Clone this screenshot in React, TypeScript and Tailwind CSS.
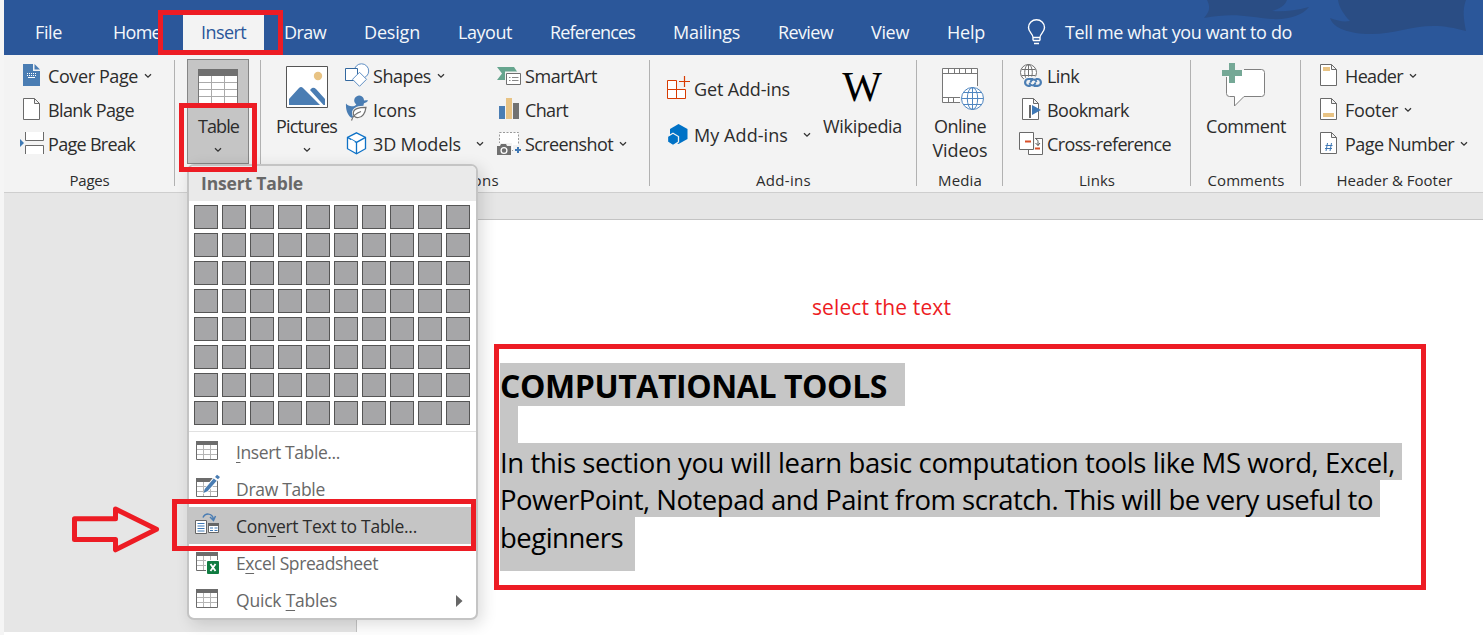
import { useLayoutEffect, useRef, useState } from "react";
import type { ReactNode } from "react";

/* Spreads its text over the width of its own box by adjusting the tracking. */
function Fit({ className = "", children }: { className?: string; children: ReactNode }) {
  const box = useRef<HTMLSpanElement>(null);
  const text = useRef<HTMLSpanElement>(null);
  const [spacing, setSpacing] = useState(0);
  useLayoutEffect(() => {
    if (!box.current || !text.current) return;
    const count = (text.current.textContent ?? "").length;
    const natural = text.current.getBoundingClientRect().width;
    setSpacing((box.current.getBoundingClientRect().width + 1 - natural) / Math.max(count, 1));
  }, []);
  return (
    <span ref={box} className={`block shrink-0 whitespace-nowrap ${className}`}>
      <span ref={text} className="inline-block" style={{ letterSpacing: spacing }}>
        {children}
      </span>
    </span>
  );
}

function Chevron({ className = "" }: { className?: string }) {
  return (
    <svg className={`shrink-0 ${className}`} width="8" height="6" viewBox="0 0 8 6" fill="none" stroke="#333" strokeWidth="1.3">
      <path d="M1 1.2 4 4.2 7 1.2" />
    </svg>
  );
}

function Icon({ children, w = 28 }: { children: ReactNode; w?: number }) {
  return (
    <svg className="shrink-0" width={w} height="34" viewBox={`0 0 ${w} 34`} fill="none">
      {children}
    </svg>
  );
}

function Row({ icon, children, className = "" }: { icon: ReactNode; children: ReactNode; className?: string }) {
  return (
    <div className={`flex h-[34px] items-center ${className}`}>
      {icon}
      <div className="flex items-center pb-[2px]">{children}</div>
    </div>
  );
}

function Group({ className, label, labelWidth, last = false, children }: { className: string; label: string; labelWidth: string; last?: boolean; children?: ReactNode }) {
  return (
    <section className={`flex shrink-0 ${className}`}>
      <div className="flex min-w-0 flex-1 flex-col pt-[5px]">
        <div className="flex h-[109px]">{children}</div>
        <div className="flex h-[24px] items-center justify-center text-[15px]">
          {label && <Fit className={labelWidth}>{label}</Fit>}
        </div>
      </div>
      {!last && <div className="mt-[5px] h-[126px] w-px bg-[#b1b1b1]" />}
    </section>
  );
}

const PageOutline = () => <path d="M3.5 4.5h11l5 5v16h-16zM14.5 4.5v5h5" fill="#fff" stroke="#6a6a6a" />;

const CoverIcon = () => (
  <Icon>
    <path d="M3 4h10v7h7v15H3z" fill="#4a7db3" />
    <path d="M14.5 4v5.500H20z" fill="#4a7db3" />
    <path d="M7 13.500h9M7 15.500h9" stroke="#fff" strokeDasharray="1 1" />
    <path d="M8 17.500h7" stroke="#fff" />
  </Icon>
);
const BlankIcon = () => <Icon><PageOutline /></Icon>;
const BreakIcon = () => (
  <Icon>
    <path d="M5.500 4v8.500h18V4M5.500 26v-8.500h18V26" fill="#fff" stroke="#6a6a6a" />
    <path d="M0 11v8l4-4z" fill="#3f7ab5" />
  </Icon>
);
const ShapesIcon = () => (
  <Icon w={29}>
    <circle cx="17.500" cy="11" r="7.200" fill="#fff" stroke="#5f8fc4" />
    <path d="M1.500 8.500h12v12h-12z" fill="#fff" stroke="#33689f" />
    <path d="m15.500 12.300 7 7-7 7-7-7z" fill="#fff" stroke="#5f8fc4" />
  </Icon>
);
const DuckIcon = () => (
  <Icon w={29}>
    <path d="M2 9.500c2 2.500 5 3.500 9 2.300l1.300-1.300A4.900 4.900 0 1 1 20 6.500c1.500 0 3-.3 4-.2-.6 1.700-2.200 2.600-4 2.900-.5 1.200-.5 2.500-.5 3.300L8 24c-4-2-6.500-8-6-14.500z" fill="#4a7db3" />
    <path d="M22.500 12.500c-7.500 0-14 1.500-13.500 7 .2 3 2.500 4.800 5.500 4.500 6-.5 7-6 8-11.500z" fill="#f3f3f3" stroke="#f3f3f3" strokeWidth="2" />
    <path d="M22 13.300c-7 0-13 1.400-12.700 6.500.2 2.600 2.500 4 5 3.700 5.700-.5 7-5.500 7.700-10.200zM7.500 26.500c1.500-5 5-7.500 9.500-9" fill="#fff" stroke="#707070" strokeWidth="1.200" />
  </Icon>
);
const CubeIcon = () => (
  <Icon w={29}>
    <path d="m12.500 4.800 9 4.600v11.300l-9 5-9-5V9.400z" fill="#fff" stroke="#0f72c6" strokeWidth="1.300" />
    <path d="m3.500 9.400 9 5 9-5M12.500 14.400v11.300" stroke="#0f72c6" strokeWidth="1.300" />
    <path d="m6.800 12.300 3.600 1.900" stroke="#fff" strokeWidth="1.600" />
  </Icon>
);
const SmartArtIcon = () => (
  <Icon w={29}>
    <path d="M1 7h17l4 6-5 7H1l5-6.500z" fill="#66a58e" />
    <path d="M9 11.500h18v14H9z" fill="#f3f3f3" />
    <path d="M10.500 13.500h14v11h-14z" fill="#fff" stroke="#707070" />
    <path d="M13 17.500h1.500M16 17.500h6.500M13 20.500h1.500M16 20.500h6.500" stroke="#888" />
  </Icon>
);
const ChartIcon = () => (
  <Icon w={29}>
    <path d="M3 12h6v13H3z" fill="#4a7db3" />
    <path d="M10 4h6v21h-6z" fill="#e8c384" />
    <path d="M17 9h6v16h-6z" fill="#727272" />
  </Icon>
);
const ScreenshotIcon = () => (
  <Icon w={29}>
    <path d="M3.500 4.500h19v18h-19z" fill="#fff" stroke="#999" strokeDasharray="2 1.500" />
    <path d="M0 15h16v13H0zM17 17h9v9h-9z" fill="#f3f3f3" />
    <path d="M1 18h3l1-2h5l1 2h4v9H1z" fill="#707070" />
    <circle cx="8" cy="22.500" r="2.900" fill="#707070" stroke="#fff" strokeWidth="1.300" />
    <path d="M22 19v6M19 22h6" stroke="#3f78b5" strokeWidth="2" />
  </Icon>
);
const LinkIcon = () => (
  <Icon>
    <g stroke="#707070">
      <circle cx="9.500" cy="12.500" r="8" fill="#fff" />
      <ellipse cx="9.500" cy="12.500" rx="3.800" ry="8" />
      <path d="M2.500 9.500h14M2.500 15.500h14M9.500 4.500v16" />
    </g>
    <rect x="4" y="16.500" width="20" height="11.500" rx="5.700" fill="#f3f3f3" />
    <path d="M14 19H9.500a3.400 3.400 0 0 0 0 6.800h2.200M14.500 25.800h4a3.400 3.400 0 0 0 0-6.800h-2" stroke="#4a7db3" strokeWidth="2.200" />
    <path d="M11.500 22.500c.5-3.500 5-4.300 6-.500M16.500 22.300c-.5 3.500-5 4.300-6 .5" stroke="#4a7db3" strokeWidth="1.800" />
  </Icon>
);
const BookmarkIcon = () => (
  <Icon>
    <PageOutline />
    <path d="M11 11v13" stroke="#6a6a6a" strokeWidth="2" />
    <path d="M13 11v10l9-5z" fill="#3f78b5" />
  </Icon>
);
const CrossRefIcon = () => (
  <Icon>
    <path d="M9.500 10.500h14v16h-14z" fill="#fff" stroke="#6a6a6a" />
    <path d="M.5 4.500h14v17H.5z" fill="#fff" stroke="#6a6a6a" />
    <path d="M15.500 8v14" stroke="#f3f3f3" />
    <path d="M6 13.500h6M16 20.500h5" stroke="#d8502a" strokeWidth="2" />
    <path d="M17 11.500c1.500 0 2 1 2 2v4M16.500 15l2.500 2.500 2-2.500" stroke="#555" />
  </Icon>
);
const HeaderIcon = () => <Icon><PageOutline /><path d="M6 7h7v4H6z" fill="#e8c384" /></Icon>;
const FooterIcon = () => <Icon><PageOutline /><path d="M6 19h11v4H6z" fill="#e8c384" /></Icon>;
const NumberIcon = () => (
  <Icon>
    <PageOutline />
    <path d="m10.500 15-1.500 8M14.500 15l-1.500 8M8.500 17.500h7M8 20.500h7" stroke="#3f78b5" />
  </Icon>
);

function FilmGlobe() {
  return (
    <svg width="44" height="44" viewBox="0 0 44 44" fill="none">
      <path d="M1.500 1.500h35v34h-35z" fill="#fff" stroke="#777" />
      <path d="M1.500 6.500h35M1.500 30.500h35M7.500 1.500v5M13.500 1.500v5M18.500 1.500v5M24.500 1.500v5M30.500 1.500v5M7.500 30.500v5M12.500 30.500v5" stroke="#777" />
      <path d="M19 19h25v25H19z" fill="#f3f3f3" />
      <path d="M19 19h17v11H19z" fill="#fff" />
      <g stroke="#4f86c0">
        <circle cx="31.500" cy="31.500" r="11" fill="#fff" />
        <ellipse cx="31.500" cy="31.500" rx="5.200" ry="11" />
        <path d="M20.500 31.500h22M22.500 25.500h18M22.500 37.500h18M31.500 20.500v22" />
      </g>
    </svg>
  );
}

function TableGlyph({ children }: { children?: ReactNode }) {
  return (
    <svg className="shrink-0" width="26" height="28" viewBox="0 0 26 28" fill="none">
      <path d="M1.500 5.500h21v17h-21z" fill="#fff" stroke="#6c6c6c" />
      <path d="M8.500 7v15M15.500 7v15M2 12.500h20M2 17.500h20" stroke="#b5b5b5" />
      <path d="M1 4h22v4H1z" fill="#6c6c6c" />
      {children}
    </svg>
  );
}

function TabBar() {
  return (
    <nav className="relative flex h-[55px] shrink-0 items-center overflow-hidden bg-[#2b579a] pl-[31px] text-[18px] text-[#f4f7fb]">
      <svg className="absolute right-0 top-0" width="290" height="55" viewBox="0 0 290 55" fill="#2a4d84">
        <path d="M14 0h80c-2 6-8 9-15 11 10 1 22 0 37-4-6 8-20 13-38 12-20-2-38-7-67-1 5-6 7-10 3-18z" />
        <path d="M145 0h128c-4 10-2 20 0 31-12-3-20-5-33-5-22 0-38 8-62 8-22 0-38-6-41-16 8 3 14 4 20 3-6-6-11-14-12-21z" />
      </svg>
      <div className="relative flex h-full items-center pt-[9px]">
        <Fit className="w-[26px]">File</Fit>
        <Fit className="ml-[52px] w-[47px]">Home</Fit>
        <div className="ml-[23px] flex h-[40px] w-[81px] items-center self-end bg-[#f3f3f3] pb-[5px] pl-[18px] text-[#2b579a]">
          <Fit className="w-[44px]">Insert</Fit>
        </div>
        <Fit className="ml-[20px] w-[41px]">Draw</Fit>
        <Fit className="ml-[39px] w-[55px]">Design</Fit>
        <Fit className="ml-[39px] w-[53px]">Layout</Fit>
        <Fit className="ml-[39px] w-[84px]">References</Fit>
        <Fit className="ml-[39px] w-[66px]">Mailings</Fit>
        <Fit className="ml-[39px] w-[54px]">Review</Fit>
        <Fit className="ml-[39px] w-[37px]">View</Fit>
        <Fit className="ml-[39px] w-[37px]">Help</Fit>
        <svg className="ml-[43px] shrink-0" width="19" height="26" viewBox="0 0 19 26" fill="none" stroke="#fff" strokeWidth="1.400">
          <path d="M6 18.500c0-4-4.500-5-4.500-10a8 7.700 0 0 1 16 0c0 5-4.500 6-4.500 10zM6 21.500h7M7 24.500h5M6 18v3.500M13 18v3.500" />
        </svg>
        <Fit className="ml-[19px] w-[226px]">Tell me what you want to do</Fit>
      </div>
    </nav>
  );
}

function Ribbon() {
  return (
    <div className="flex h-[137px] shrink-0 bg-[#f3f3f3] text-[18px] leading-[24px] text-[#2c2c2c]">
      <Group className="w-[171px]" label="Pages" labelWidth="w-[39px]">
        <div className="pl-[16px]">
          <Row icon={<CoverIcon />}><Fit className="w-[89px]">Cover Page</Fit><Chevron className="ml-[7px]" /></Row>
          <Row icon={<BlankIcon />}><Fit className="w-[85px]">Blank Page</Fit></Row>
          <Row icon={<BreakIcon />}><Fit className="w-[86px]">Page Break</Fit></Row>
        </div>
      </Group>

      <Group className="w-[86px]" label="" labelWidth="">
        <div className="-mt-px ml-[12px] flex h-[105px] w-[62px] shrink-0 flex-col items-center border border-[#868686] bg-[#c5c5c5] pt-[9px]">
          <svg className="shrink-0" width="40" height="36" viewBox="0 0 40 36" fill="none">
            <path d="M.5.5h39v35H.5z" fill="#fff" stroke="#777" />
            <path d="M13.500 7v28M26.500 7v28M1 13.500h38M1 20.500h38M1 27.500h38" stroke="#aaa" />
            <path d="M0 0h40v7H0z" fill="#707070" />
          </svg>
          <Fit className="mt-[9px] w-[40px]">Table</Fit>
          <Chevron className="mt-[9px]" />
        </div>
      </Group>

      <Group className="w-[389px]" label="Illustrations" labelWidth="w-[86px]">
        <div className="flex w-[83px] shrink-0 flex-col items-center pl-[9px] pt-[6px]">
          <svg className="shrink-0" width="42" height="42" viewBox="0 0 42 42">
            <path d="M.5.5h41v41H.5z" fill="#fff" stroke="#555" />
            <circle cx="32" cy="10" r="4.200" fill="#e8c384" />
            <path d="M3 39V33L13 22q2-2 4 0l17 17zM24 24l2-2q2-1 4 1l9 10v6h-1.500z" fill="#4a7db3" />
          </svg>
          <Fit className="-ml-[2px] mt-[6px] w-[60px]">Pictures</Fit>
          <Chevron className="mt-[9px]" />
        </div>
        <div className="w-[152px] shrink-0">
          <Row icon={<ShapesIcon />}><Fit className="w-[57px]">Shapes</Fit><Chevron className="ml-[7px]" /></Row>
          <Row icon={<DuckIcon />}><Fit className="w-[42px]">Icons</Fit></Row>
          <Row icon={<CubeIcon />}><Fit className="w-[87px]">3D Models</Fit><Chevron className="ml-[16px]" /></Row>
        </div>
        <div>
          <Row icon={<SmartArtIcon />}><Fit className="w-[71px]">SmartArt</Fit></Row>
          <Row icon={<ChartIcon />}><Fit className="w-[42px]">Chart</Fit></Row>
          <Row icon={<ScreenshotIcon />}><Fit className="w-[87px]">Screenshot</Fit><Chevron className="ml-[7px]" /></Row>
        </div>
      </Group>

      <Group className="w-[267px]" label="Add-ins" labelWidth="w-[54px]">
        <div className="w-[173px] shrink-0 pl-[16px] pt-[13px]">
          <Row icon={
            <Icon>
              <path d="M1.500 7.500h9v9h-9zM1.500 16.500h9v9h-9zM10.500 16.500h9v9h-9z" fill="#fff" stroke="#d83b01" />
              <path d="M18.500 3v11M13 8.500h11" stroke="#d83b01" strokeWidth="1.200" />
            </Icon>
          }><Fit className="w-[95px]">Get Add-ins</Fit></Row>
          <Row className="mt-[12px]" icon={
            <Icon>
              <path d="m12.500 5 9 5v10l-9 5-8.500-5V10z" fill="#0072c6" />
              <path d="m7 14.300 5.500 3.200v5.500L7 26.500 1.500 23v-5.500z" fill="#0072c6" stroke="#f3f3f3" strokeWidth="1.300" />
            </Icon>
          }><Fit className="w-[93px]">My Add-ins</Fit><Chevron className="ml-[16px]" /></Row>
        </div>
        <div className="flex w-[78px] shrink-0 flex-col items-center">
          <span className="mt-[5px] h-[49px] font-['Liberation_Serif',serif] text-[42px] leading-[44px] text-black">W</span>
          <Fit className="w-[78px]">Wikipedia</Fit>
        </div>
      </Group>

      <Group className="w-[86px]" label="Media" labelWidth="w-[43px]">
        <div className="flex w-[86px] flex-col items-center pt-[7px]">
          <div className="h-[47px] pl-[7px]"><FilmGlobe /></div>
          <Fit className="w-[51px]">Online</Fit>
          <Fit className="w-[54px]">Videos</Fit>
        </div>
      </Group>

      <Group className="w-[188px]" label="Links" labelWidth="w-[35px]">
        <div className="pl-[16px]">
          <Row icon={<LinkIcon />}><Fit className="w-[31px]">Link</Fit></Row>
          <Row icon={<BookmarkIcon />}><Fit className="w-[81px]">Bookmark</Fit></Row>
          <Row icon={<CrossRefIcon />}><Fit className="w-[123px]">Cross-reference</Fit></Row>
        </div>
      </Group>

      <Group className="w-[110px]" label="Comments" labelWidth="w-[76px]">
        <div className="flex w-[109px] flex-col items-center pt-[3px]">
          <svg className="-ml-[5px] shrink-0" width="46" height="46" viewBox="0 0 46 46" fill="none">
            <path d="M7.500 6.500h34a3 3 0 0 1 3 3v21a3 3 0 0 1-3 3H24l-9.500 9.500v-9.500h-5a3 3 0 0 1-3-3v-21z" fill="#fff" stroke="#808080" />
            <path d="M0 0h24v14H0z" fill="#f3f3f3" />
            <path d="M7 7h17v15H7z" fill="#fff" />
            <path d="M9 0h6v7h7v6h-7v7H9v-7H2V7h7z" fill="#75a896" />
          </svg>
          <Fit className="mt-[5px] w-[79px]">Comment</Fit>
        </div>
      </Group>

      <Group className="w-[182px] pl-[4px]" label="Header & Footer" labelWidth="w-[115px]" last>
        <div className="pl-[12px]">
          <Row icon={<HeaderIcon />}><Fit className="w-[57px]">Header</Fit><Chevron className="ml-[7px]" /></Row>
          <Row icon={<FooterIcon />}><Fit className="w-[52px]">Footer</Fit><Chevron className="ml-[7px]" /></Row>
          <Row icon={<NumberIcon />}><Fit className="w-[108px]">Page Number</Fit><Chevron className="ml-[7px]" /></Row>
        </div>
      </Group>
    </div>
  );
}

function DocumentArea() {
  return (
    <div className="flex min-h-0 flex-1 flex-col border-t border-[#cecece] bg-[#e6e6e6]">
      <div className="h-[26px] shrink-0" />
      <div className="flex flex-1">
        <div className="w-[352px] shrink-0" />
        <main className="flex-1 border-l border-t border-[#c3c3c3] bg-white">
          <div className="flex h-[124px] pl-[455px] pt-[73px] text-[21px] leading-[28px] text-[#ed1c24]">
            <Fit className="w-[138px]">select the text</Fit>
          </div>
          <div className="ml-[137px] h-[246px] w-[932px] border-[5px] border-[#ed1c24] pl-px pt-[14px] text-[27.500px] text-black">
            <div className="flex h-[43px] w-[405px] items-center bg-[#c6c6c6] pt-[2px] text-[32px] font-bold leading-none">
              <Fit className="w-[386px]">COMPUTATIONAL TOOLS</Fit>
            </div>
            <div className="h-[37px] w-[18px] bg-[#c6c6c6]" />
            <div className="h-[37px] w-[902px] bg-[#c6c6c6] leading-[39px]">
              <Fit className="w-[894px]">In this section you will learn basic computation tools like MS word, Excel,</Fit>
            </div>
            <div className="h-[37px] w-[880px] bg-[#c6c6c6] leading-[39px]">
              <Fit className="w-[872px]">PowerPoint, Notepad and Paint from scratch. This will be very useful to</Fit>
            </div>
            <div className="h-[54px] w-[135px] bg-[#c6c6c6] leading-[41px]">
              <Fit className="w-[122px]">beginners</Fit>
            </div>
          </div>
        </main>
      </div>
    </div>
  );
}

function MenuItem({ icon, active = false, children }: { icon: ReactNode; active?: boolean; children: ReactNode }) {
  return (
    <div className={`flex h-[37px] items-center pl-[6px] ${active ? "bg-[#c5c5c5] text-[#2c2c2c]" : "text-[#686868]"}`}>
      <div className="w-[41px] shrink-0 pb-[2px]">{icon}</div>
      <div className="flex items-center pt-[2px]">{children}</div>
    </div>
  );
}

function K({ children }: { children: ReactNode }) {
  return <span className="underline decoration-1 underline-offset-[3px] [text-decoration-skip-ink:none]">{children}</span>;
}

function TableMenu() {
  return (
    <div className="absolute left-[187px] top-[164px] h-[456px] w-[291px] overflow-hidden rounded-[7px] border-2 border-[#c4c4c4] bg-white text-[17.500px] shadow-[4px_4px_16px_rgba(0,0,0,0.14)]">
      <div className="flex h-[35px] items-center bg-[#eaeaea] pl-[12px] font-bold text-[#686868]">
        <Fit className="w-[101px]">Insert Table</Fit>
      </div>
      <div className="grid h-[231px] grid-cols-[repeat(10,24px)] content-start gap-[4px] border-b border-[#e1e1e1] pl-[5px] pt-[4px]">
        {Array.from({ length: 80 }, (_, i) => (
          <div key={i} className="h-[24px] border border-[#555] bg-[#a6a6a8]" />
        ))}
      </div>
      <div className="pt-px">
        <MenuItem icon={<TableGlyph />}><Fit className="w-[103px]"><K>I</K>nsert Table...</Fit></MenuItem>
        <MenuItem icon={
          <TableGlyph>
            <path d="m8 20 2-6L20 1l5 3L13 18z" fill="#fff" />
            <path d="m8.500 19 1.200-4 9-10.500 3 2.300-9.200 10.500zM20 3l2-2.300 3 2.300-2 2.300z" fill="#4a7db3" />
          </TableGlyph>
        }><Fit className="w-[88px]"><K>D</K>raw Table</Fit></MenuItem>
        <MenuItem active icon={
          <svg width="26" height="28" viewBox="0 0 26 28" fill="none">
            <path d="M.5 9.500h11v13H.5z" fill="#fff" stroke="#666" />
            <path d="M2.500 12.500h7M2.500 15h7M2.500 17.500h7M2.500 20h7" stroke="#3f78b5" />
            <path d="M13.500 13.500h10v8h-10z" fill="#fff" stroke="#666" />
            <path d="M13 12h11v3H13z" fill="#666" />
            <path d="M15 17h3M19.500 17h3M15 19.500h3M19.500 19.500h3" stroke="#3f78b5" />
            <path d="M8 6.500c2-4.500 9-5 10.500 1.500M15 6l3.500 3.500L20.500 5" stroke="#4a7db3" strokeWidth="1.500" />
          </svg>
        }><Fit className="w-[180px]">Con<K>v</K>ert Text to Table...</Fit></MenuItem>
        <MenuItem icon={
          <TableGlyph>
            <path d="M11 12h14v14H11z" fill="#fff" />
            <rect x="12" y="13" width="12" height="13" rx="1" fill="#107c41" />
            <path d="m15.500 16 5 7M20.500 16l-5 7" stroke="#fff" strokeWidth="1.800" />
          </TableGlyph>
        }><Fit className="w-[141px]">E<K>x</K>cel Spreadsheet</Fit></MenuItem>
        <MenuItem icon={<TableGlyph />}>
          <Fit className="w-[100px]">Quick <K>T</K>ables</Fit>
          <svg className="ml-[120px]" width="7" height="12" viewBox="0 0 7 12"><path d="M0 0v12l6.500-6z" fill="#666" /></svg>
        </MenuItem>
      </div>
    </div>
  );
}

function Annotations() {
  return (
    <>
      <div className="absolute left-[158px] top-[10px] h-[45px] w-[125px] border-[5px] border-[#ed1c24]" />
      <div className="absolute left-[179px] top-[103px] h-[69px] w-[78px] border-[5px] border-[#ed1c24]" />
      <div className="absolute left-[172px] top-[499px] h-[52px] w-[304px] border-[5px] border-[#ed1c24]" />
      <svg className="absolute left-[70px] top-[504px]" width="92" height="52" viewBox="0 0 92 52" fill="none" stroke="#ed1c24" strokeWidth="5">
        <path d="M4.500 14.800h41V5l41 20.300-41 20.500v-10.300h-41z" strokeLinejoin="round" />
      </svg>
    </>
  );
}

export default function App() {
  return (
    <div className="relative flex h-[635px] w-[1483px] overflow-hidden bg-white font-['Open_Sans','Noto_Sans',sans-serif]">
      <div className="w-[4px] shrink-0 bg-[#f5f5f5]" />
      <div className="flex min-w-0 flex-1 flex-col pb-[3px]">
        <TabBar />
        <Ribbon />
        <DocumentArea />
      </div>
      <TableMenu />
      <Annotations />
    </div>
  );
}
